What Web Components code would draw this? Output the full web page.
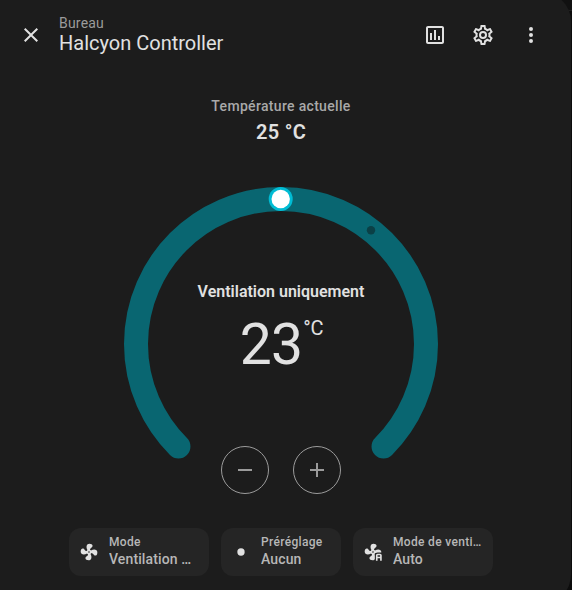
<!DOCTYPE html>
<html lang="fr"><head><meta charset="utf-8"><title>Halcyon Controller</title>
<style>html,body{margin:0;height:100%;overflow:hidden}body{background:linear-gradient(#111 0 10px,#202020 10px 11px,#0c0c0c 11px);font-family:Roboto,sans-serif;color:#e1e1e1}</style></head>
<body>
<climate-dialog></climate-dialog>
<script>
const ICONS={
close:'<path d="M19,6.41L17.59,5L12,10.59L6.41,5L5,6.41L10.59,12L5,17.59L6.41,19L12,13.41L17.59,19L19,17.59L13.41,12L19,6.41Z"/>',
chart:'<path d="M9 17H7V10H9V17M13 17H11V7H13V17M17 17H15V13H17V17M19 19H5V5H19V19.1M19 3H5C3.9 3 3 3.9 3 5V19C3 20.1 3.9 21 5 21H19C20.1 21 21 20.1 21 19V5C21 3.9 20.1 3 19 3Z"/>',
cog:'<path d="M12,8A4,4 0 0,1 16,12A4,4 0 0,1 12,16A4,4 0 0,1 8,12A4,4 0 0,1 12,8M12,10A2,2 0 0,0 10,12A2,2 0 0,0 12,14A2,2 0 0,0 14,12A2,2 0 0,0 12,10M10,22C9.75,22 9.54,21.82 9.5,21.58L9.13,18.93C8.5,18.68 7.96,18.34 7.44,17.94L4.95,18.95C4.73,19.03 4.46,18.95 4.34,18.73L2.34,15.27C2.21,15.05 2.27,14.78 2.46,14.63L4.57,12.97L4.5,12L4.57,11L2.46,9.37C2.27,9.22 2.21,8.95 2.34,8.73L4.34,5.27C4.46,5.05 4.73,4.96 4.95,5.05L7.44,6.05C7.96,5.66 8.5,5.32 9.13,5.07L9.5,2.42C9.54,2.18 9.75,2 10,2H14C14.25,2 14.46,2.18 14.5,2.42L14.87,5.07C15.5,5.32 16.04,5.66 16.56,6.05L19.05,5.05C19.27,4.96 19.54,5.05 19.66,5.27L21.66,8.73C21.79,8.95 21.73,9.22 21.54,9.37L19.43,11L19.5,12L19.43,13L21.54,14.63C21.73,14.78 21.79,15.05 21.66,15.27L19.66,18.73C19.54,18.95 19.27,19.04 19.05,18.95L16.56,17.95C16.04,18.34 15.5,18.68 14.87,18.93L14.5,21.58C14.46,21.82 14.25,22 14,22H10M11.25,4L10.88,6.61C9.68,6.86 8.62,7.5 7.85,8.39L5.44,7.35L4.69,8.65L6.8,10.2C6.4,11.37 6.4,12.64 6.8,13.8L4.68,15.36L5.43,16.66L7.86,15.62C8.63,16.5 9.68,17.14 10.87,17.38L11.24,20H12.76L13.13,17.39C14.32,17.14 15.37,16.5 16.14,15.62L18.57,16.66L19.32,15.36L17.2,13.81C17.6,12.64 17.6,11.37 17.2,10.2L19.31,8.65L18.56,7.35L16.15,8.39C15.38,7.5 14.32,6.86 13.12,6.62L12.75,4H11.25Z"/>',
dots:'<path d="M12,16A2,2 0 0,1 14,18A2,2 0 0,1 12,20A2,2 0 0,1 10,18A2,2 0 0,1 12,16M12,10A2,2 0 0,1 14,12A2,2 0 0,1 12,14A2,2 0 0,1 10,12A2,2 0 0,1 12,10M12,4A2,2 0 0,1 14,6A2,2 0 0,1 12,8A2,2 0 0,1 10,6A2,2 0 0,1 12,4Z"/>',
minus:'<path d="M19,13H5V11H19V13Z"/>',
plus:'<path d="M19,13H13V19H11V13H5V11H11V5H13V11H19V13Z"/>',
dot:'<circle cx="12" cy="12" r="4.4"/>',
fan:'<path d="M12,11A1,1 0 0,0 11,12A1,1 0 0,0 12,13A1,1 0 0,0 13,12A1,1 0 0,0 12,11M12.5,2C17,2 17.11,5.57 14.75,6.75C13.76,7.24 13.32,8.29 13.13,9.22C13.61,9.42 14.03,9.73 14.35,10.13C18.05,8.13 22.03,8.92 22.03,12.5C22.03,17 18.46,17.1 17.28,14.73C16.78,13.74 15.72,13.3 14.79,13.11C14.59,13.59 14.28,14 13.88,14.34C15.87,18.03 15.08,22 11.5,22C7,22 6.91,18.42 9.27,17.24C10.25,16.75 10.69,15.71 10.89,14.79C10.4,14.59 9.97,14.27 9.65,13.87C5.96,15.85 2,15.07 2,11.5C2,7 5.56,6.89 6.74,9.26C7.24,10.25 8.29,10.68 9.22,10.87C9.41,10.39 9.73,9.97 10.14,9.65C8.15,5.96 8.94,2 12.5,2Z"/>'};
ICONS.fanAuto='<mask id="m"><rect width="24" height="24" fill="#fff"/><path d="M14.2 24V16Q14.2 12.6 17.6 12.6H24V24Z" fill="#000"/></mask><g mask="url(#m)">'+ICONS.fan+'</g><path fill-rule="evenodd" d="M17.5 14H20.5Q22.5 14 22.5 16V22.4H20.5V19.6H17.5V22.4H15.5V16Q15.5 14 17.5 14ZM17.5 16V17.8H20.5V16Z"/>';
function define(name,render){customElements.define(name,class extends HTMLElement{connectedCallback(){if(!this.shadowRoot)this.attachShadow({mode:'open'}).innerHTML=render(this)}})}
define('ui-icon',e=>`<style>:host{display:block;width:var(--s,24px);height:var(--s,24px);flex:none}svg{display:block;width:100%;height:100%;fill:currentColor}</style><svg viewBox="0 0 24 24">${ICONS[e.getAttribute('name')]}</svg>`);
define('dialog-header',()=>`<style>:host{display:flex;align-items:center;height:70px;box-sizing:border-box;padding:0 28px 0 19px}
.t{margin-left:16px;padding-bottom:2px;flex:1;white-space:nowrap}.s{font-size:14px;line-height:18px;color:#9b9b9b;letter-spacing:.2px}.h{font-size:20px;line-height:22px}
.a{display:flex;gap:24px}</style>
<ui-icon name="close"></ui-icon><div class="t"><div class="s"><slot name="area"></slot></div><div class="h"><slot></slot></div></div>
<div class="a"><ui-icon name="chart"></ui-icon><ui-icon name="cog"></ui-icon><ui-icon name="dots"></ui-icon></div>`);
define('current-reading',()=>`<style>:host{display:block;text-align:center;padding-top:26px;height:88px;box-sizing:content-box}
.l{font-size:14px;line-height:20px;font-weight:500;letter-spacing:.32px;color:#a9a9a9}.v{font-size:20px;line-height:32px;font-weight:600;letter-spacing:.3px}</style>
<div class="l"><slot name="label"></slot></div><div class="v"><slot></slot></div>`);
define('round-button',e=>`<style>:host{display:grid;place-items:center;box-sizing:border-box;width:48px;height:48px;border:1px solid #9b9b9b;border-radius:50%;color:#9b9b9b}</style><ui-icon name="${e.getAttribute('icon')}"></ui-icon>`);
define('climate-dial',()=>`<style>:host{display:grid;width:320px;height:320px;margin:0 auto}
svg,.c{grid-area:1/1}.c{display:flex;flex-direction:column;align-items:center;padding-top:96px}
.m{font-size:16px;line-height:24px;font-weight:600;letter-spacing:0;white-space:nowrap}
.n{display:flex;margin:13px 0 0 1px;height:56px;font-size:57px;line-height:56px;letter-spacing:-.8px}.u{font-size:20px;line-height:22px;letter-spacing:-.2px;margin-left:1px}
.b{display:flex;gap:24px;margin-top:73px}</style>
<svg width="320" height="320" viewBox="0 0 320 320"><path d="M57.47 262.53A145 145 0 1 1 262.53 262.53" fill="none" stroke="#096671" stroke-width="24" stroke-linecap="round"/><circle cx="250" cy="46.3" r="4.2" fill="#0b4046"/><circle cx="159.7" cy="15" r="12" fill="#00bcd4"/><circle cx="159.7" cy="15" r="9.2" fill="#fff"/></svg>
<div class="c"><div class="m"><slot name="mode"></slot></div><div class="n"><span><slot></slot></span><span class="u">°C</span></div><div class="b"><round-button icon="minus"></round-button><round-button icon="plus"></round-button></div></div>`);
define('select-tile',e=>`<style>:host{display:flex;align-items:center;box-sizing:border-box;height:48px;border-radius:12px;background:#252525;padding:0 10px;gap:10px}
ui-icon{--s:20px}.x{flex:1;min-width:0}.x div{overflow:hidden;text-overflow:ellipsis;white-space:nowrap;color:#b7b7b7}
.x .l{font-size:12px;line-height:16px;font-weight:500;letter-spacing:.32px}.x .v{font-size:14px;line-height:18px;padding-bottom:2px;font-weight:500;letter-spacing:.12px}</style>
<ui-icon name="${e.getAttribute('icon')}"></ui-icon><div class="x"><div class="l">${e.getAttribute('label')}</div><div class="v">${e.getAttribute('value')}</div></div>`);
define('climate-dialog',()=>`<style>:host{display:block;position:relative;isolation:isolate;width:571px;height:590px;overflow:hidden}
/* the sheet runs past the window's top and bottom, so only part of each round corner shows */
:host::before{content:"";position:absolute;z-index:-1;inset:-7px 0 -13px -30px;border-radius:28px;background:#1c1c1c}
.p{width:562px}.r{display:flex;justify-content:center;gap:12px;margin-top:24px}</style>
<dialog-header><span slot="area">Bureau</span>Halcyon Controller</dialog-header>
<div class="p"><current-reading><span slot="label">Température actuelle</span>25 °C</current-reading>
<climate-dial><span slot="mode">Ventilation uniquement</span>23</climate-dial>
<div class="r"><select-tile style="width:140px" icon="fan" label="Mode" value="Ventilation uniquement"></select-tile><select-tile style="width:120px" icon="dot" label="Préréglage" value="Aucun"></select-tile><select-tile style="width:140px" icon="fanAuto" label="Mode de ventilation" value="Auto"></select-tile></div></div>`);
</script></body></html>
